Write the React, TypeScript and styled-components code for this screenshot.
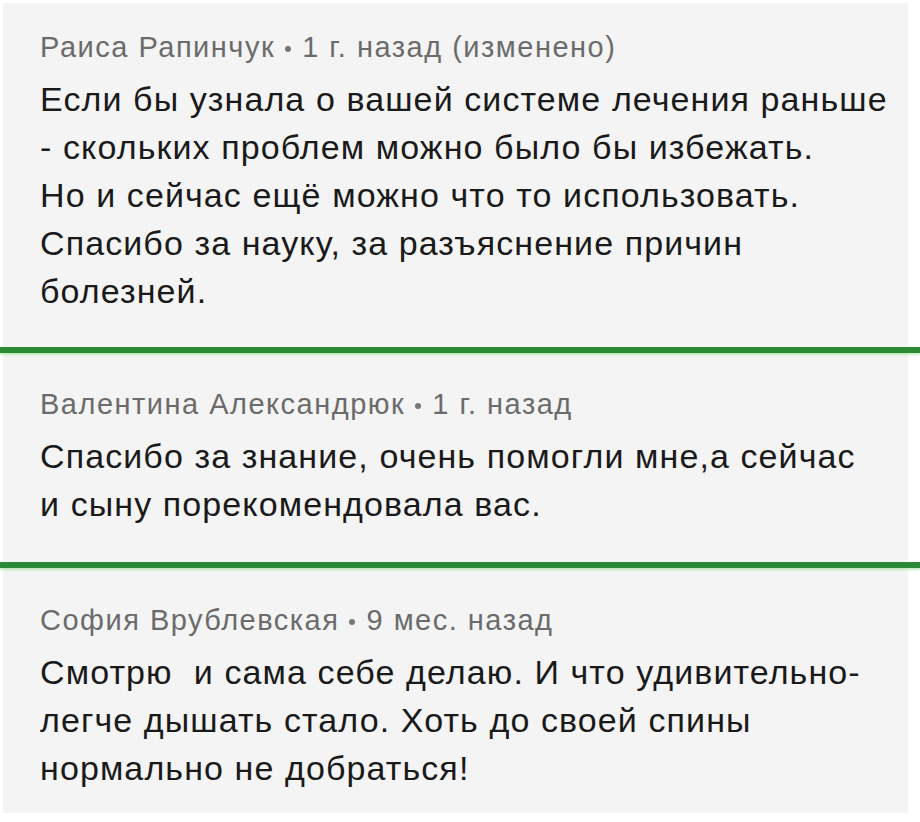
import React from "react";
import styled, { createGlobalStyle } from "styled-components";

const GlobalStyle = createGlobalStyle`
  html, body {
    margin: 0;
    padding: 0;
    background: #ffffff;
  }
  body {
    font-family: "Liberation Sans", Arial, sans-serif;
  }
`;

interface CommentData {
  author: string;
  time: string;
  edited?: boolean;
  lines: string[];
  top: number;
  bottom: number;
}

const comments: CommentData[] = [
  {
    author: "Раиса Рапинчук",
    time: "1 г. назад",
    edited: true,
    lines: [
      "Если бы узнала о вашей системе лечения раньше",
      "- скольких проблем можно было бы избежать.",
      "Но и сейчас ещё можно что то использовать.",
      "Спасибо за науку, за разъяснение причин",
      "болезней.",
    ],
    top: 24,
    bottom: 32,
  },
  {
    author: "Валентина Александрюк",
    time: "1 г. назад",
    lines: [
      "Спасибо за знание, очень помогли мне,а сейчас",
      "и сыну порекомендовала вас.",
    ],
    top: 31,
    bottom: 34,
  },
  {
    author: "София Врублевская",
    time: "9 мес. назад",
    lines: [
      "Смотрю  и сама себе делаю. И что удивительно-",
      "легче дышать стало. Хоть до своей спины",
      "нормально не добраться!",
    ],
    top: 32,
    bottom: 21,
  },
];

const Page = styled.div`
  width: 920px;
  height: 822px;
  padding-top: 3px;
  box-sizing: border-box;
  display: flex;
  flex-direction: column;
  background: #ffffff;
`;

const Card = styled.section<{ $top: number; $bottom: number }>`
  margin: 0 12px 0 3px;
  background: #f4f4f4;
  padding: ${(p) => p.$top}px 10px ${(p) => p.$bottom}px 37px;
  display: flex;
  flex-direction: column;
`;

const Divider = styled.div`
  height: 6px;
  background: #2b8a33;
  box-shadow: 0 2px 2px rgba(150, 225, 150, 0.55);
  position: relative;
`;

const Meta = styled.div`
  font-size: 29px;
  line-height: 40px;
  letter-spacing: 1.5px;
  color: #6b6b6b;
  white-space: pre;
  margin-bottom: 8px;
`;

const Dot = styled.span`
  display: inline-block;
  width: 6px;
  height: 6px;
  border-radius: 50%;
  background: #777777;
  margin: 0 11px 0 10px;
  vertical-align: middle;
`;

const Body = styled.div`
  font-size: 34px;
  line-height: 48px;
  letter-spacing: 1.1px;
  color: #1a1a1a;
  white-space: pre;
`;

const Comment: React.FC<{ data: CommentData }> = ({ data }) => (
  <Card $top={data.top} $bottom={data.bottom}>
    <Meta>
      {data.author}
      <Dot />
      {data.time}
      {data.edited ? " (изменено)" : ""}
    </Meta>
    <Body>
      {data.lines.map((line) => (
        <div key={line}>{line}</div>
      ))}
    </Body>
  </Card>
);

export default function App() {
  return (
    <Page>
      <GlobalStyle />
      <Comment data={comments[0]} />
      <Divider />
      <Comment data={comments[1]} />
      <Divider />
      <Comment data={comments[2]} />
    </Page>
  );
}
